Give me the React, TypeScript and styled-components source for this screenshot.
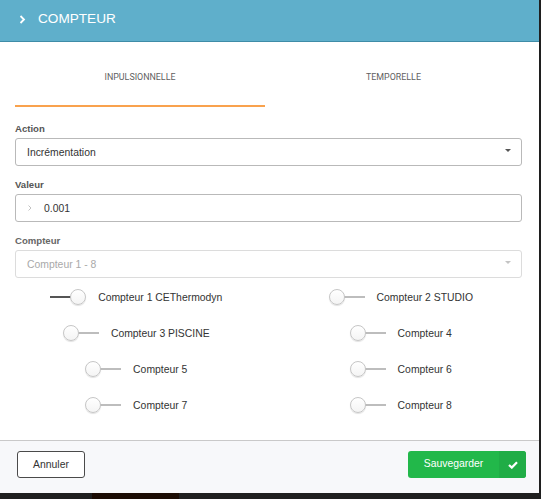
import React from "react";
import styled, { createGlobalStyle } from "styled-components";

const GlobalStyle = createGlobalStyle`
  html, body {
    margin: 0;
    padding: 0;
    background: #1f1f1f;
  }
  body {
    font-family: "Liberation Sans", Arial, sans-serif;
  }
  * {
    box-sizing: border-box;
  }
`;

const Page = styled.div`
  width: 541px;
  height: 499px;
  display: flex;
  flex-direction: column;
  overflow: hidden;
  background: #1f1f1f;
`;

const Modal = styled.div`
  width: 539px;
  height: 493px;
  background: #fff;
  display: flex;
  flex-direction: column;
  flex-shrink: 0;
`;

const Backdrop = styled.div`
  flex: 1;
  display: flex;
  padding-left: 92px;
`;

const BackdropTile = styled.div`
  width: 87px;
  background: #1b0c03;
`;

const Header = styled.header`
  height: 42px;
  flex-shrink: 0;
  background: #5fafcb;
  border-bottom: 1px solid #3f8ca7;
  display: flex;
  align-items: center;
  gap: 12px;
  padding: 0 0 3px 19px;
  color: #fff;
`;

const Title = styled.h1`
  margin: 0;
  font-size: 13.6px;
  font-weight: normal;
  line-height: 16px;
  text-transform: uppercase;
`;

const Body = styled.div`
  flex: 1;
  padding: 0 17px 0 15px;
  display: flex;
  flex-direction: column;
`;

const TabBar = styled.div`
  display: grid;
  grid-template-columns: 250px 1fr;
`;

const Tab = styled.div<{ $active?: boolean }>`
  padding: 28px 0 20px;
  line-height: 15px;
  font-family: Roboto, "Liberation Sans", sans-serif;
  font-size: 8.9px;
  color: #5f5f5f;
  text-align: center;
  text-transform: uppercase;
  border-bottom: 2px solid ${(p) => (p.$active ? "#f9a24d" : "transparent")};
`;

const Form = styled.div`
  display: flex;
  flex-direction: column;
  gap: 13px;
  margin-top: 16px;
`;

const Field = styled.div`
  display: flex;
  flex-direction: column;
  gap: 3px;
`;

const Label = styled.label<{ $muted?: boolean }>`
  font-size: 9.6px;
  font-weight: bold;
  line-height: 12px;
  color: ${(p) => (p.$muted ? "#666" : "#555")};
`;

const Control = styled.div<{ $disabled?: boolean }>`
  height: 28px;
  border: 1px solid ${(p) => (p.$disabled ? "#dcdcdc" : "#b9b9b9")};
  border-radius: 3px;
  display: flex;
  align-items: center;
  padding: 0 10px 0 11px;
  font-size: 10.4px;
  color: ${(p) => (p.$disabled ? "#a9a9a9" : "#333")};
`;

const ControlText = styled.span`
  flex: 1;
`;

const Caret = styled.span<{ $disabled?: boolean }>`
  width: 0;
  height: 0;
  margin-bottom: 3px;
  border-left: 3px solid transparent;
  border-right: 3px solid transparent;
  border-top: 3px solid ${(p) => (p.$disabled ? "#c4c4c4" : "#555")};
`;

const Prefix = styled.span`
  display: flex;
  width: 17px;
  padding-left: 1px;
  color: #bbb;
`;

const ToggleGrid = styled.div`
  display: grid;
  grid-template-columns: 1fr 1fr;
  grid-auto-rows: 36px;
  margin: 1px -11px 0;
  justify-items: center;
  align-items: center;
`;

const ToggleItem = styled.div`
  display: inline-flex;
  align-items: center;
  gap: 12px;
  font-size: 10.4px;
  color: #333;
`;

const Switch = styled.span<{ $on?: boolean }>`
  position: relative;
  width: 36px;
  height: 16px;
  display: flex;
  align-items: center;
  justify-content: ${(p) => (p.$on ? "flex-end" : "flex-start")};

  &::before {
    content: "";
    position: absolute;
    top: 7px;
    left: ${(p) => (p.$on ? "0" : "8px")};
    right: ${(p) => (p.$on ? "8px" : "0")};
    height: 2px;
    background: ${(p) => (p.$on ? "#555" : "#bdbdbd")};
  }
`;

const Knob = styled.span`
  position: relative;
  width: 16px;
  height: 16px;
  border-radius: 50%;
  background: linear-gradient(#ffffff, #f4f4f4);
  border: 1px solid #c6c6c6;
  box-shadow: 0 1px 1px rgba(0, 0, 0, 0.12);
`;

const Footer = styled.footer`
  height: 53px;
  flex-shrink: 0;
  background: #f7f8fa;
  border-top: 1px solid #c9c9c9;
  display: flex;
  justify-content: space-between;
  align-items: flex-start;
  padding: 10px 13px 0 17px;
`;

const CancelButton = styled.button`
  width: 68px;
  height: 27px;
  border: 1px solid #4a4a4a;
  border-radius: 3px;
  background: #fff;
  font-family: "Liberation Sans", Arial, sans-serif;
  font-size: 10.4px;
  color: #333;
  padding: 0;
`;

const SaveButton = styled.button`
  height: 27px;
  width: 118px;
  display: flex;
  padding: 0;
  border: none;
  border-radius: 3px;
  overflow: hidden;
  background: #22b84a;
  font-family: "Liberation Sans", Arial, sans-serif;
  font-size: 10.4px;
  color: #fff;
`;

const SaveLabel = styled.span`
  flex: 1;
  display: flex;
  align-items: center;
  justify-content: center;
  padding-bottom: 2px;
`;

const SaveIcon = styled.span`
  width: 27px;
  display: flex;
  align-items: center;
  justify-content: center;
  background: #20ad46;
`;

const counters = [
  { name: "Compteur 1 CEThermodyn", on: true },
  { name: "Compteur 2 STUDIO", on: false },
  { name: "Compteur 3 PISCINE", on: false },
  { name: "Compteur 4", on: false },
  { name: "Compteur 5", on: false },
  { name: "Compteur 6", on: false },
  { name: "Compteur 7", on: false },
  { name: "Compteur 8", on: false },
];

export default function App() {
  return (
    <>
      <GlobalStyle />
      <Page>
        <Modal>
          <Header>
            <svg width="7" height="9" viewBox="0 0 7 9">
              <path d="M1.5 1 L5 4.5 L1.5 8" fill="none" stroke="#fff" strokeWidth="1.8" />
            </svg>
            <Title>Compteur</Title>
          </Header>
          <Body>
            <TabBar>
              <Tab $active>Inpulsionnelle</Tab>
              <Tab>Temporelle</Tab>
            </TabBar>
            <Form>
              <Field>
                <Label>Action</Label>
                <Control>
                  <ControlText>Incrémentation</ControlText>
                  <Caret />
                </Control>
              </Field>
              <Field>
                <Label>Valeur</Label>
                <Control>
                  <Prefix>
                    <svg width="4" height="6" viewBox="0 0 4 6">
                      <path d="M0.5 0.5 L3 3 L0.5 5.5" fill="none" stroke="#bbb" strokeWidth="0.9" />
                    </svg>
                  </Prefix>
                  <ControlText>0.001</ControlText>
                </Control>
              </Field>
              <Field>
                <Label $muted>Compteur</Label>
                <Control $disabled>
                  <ControlText>Compteur 1 - 8</ControlText>
                  <Caret $disabled />
                </Control>
              </Field>
            </Form>
            <ToggleGrid>
              {counters.map((c) => (
                <ToggleItem key={c.name}>
                  <Switch $on={c.on}>
                    <Knob />
                  </Switch>
                  {c.name}
                </ToggleItem>
              ))}
            </ToggleGrid>
          </Body>
          <Footer>
            <CancelButton>Annuler</CancelButton>
            <SaveButton>
              <SaveLabel>Sauvegarder</SaveLabel>
              <SaveIcon>
                <svg width="10" height="8" viewBox="0 0 10 8">
                  <path d="M1 4 L3.8 6.6 L9 1.2" fill="none" stroke="#fff" strokeWidth="2.2" />
                </svg>
              </SaveIcon>
            </SaveButton>
          </Footer>
        </Modal>
        <Backdrop>
          <BackdropTile />
        </Backdrop>
      </Page>
    </>
  );
}
